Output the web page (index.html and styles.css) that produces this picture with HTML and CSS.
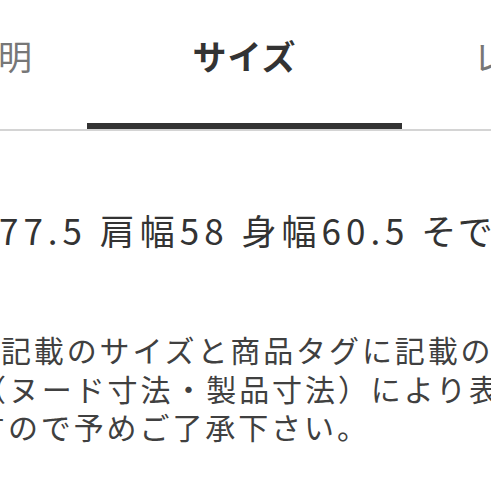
FILE: index.html
```html
<!DOCTYPE html>
<html lang="ja">
<head>
	<meta charset="utf-8">
	<title>サイズ</title>
	<link rel="stylesheet" href="styles.css">
</head>
<body>

<div class="itemTabs">
	<div class="itemTab itemTabPrev"><span>商品の説明</span></div>
	<div class="itemTab itemTabActive"><span>サイズ</span></div>
	<div class="itemTab itemTabNext"><span>レビュー</span></div>
</div>

<div class="itemSize">
	<p class="itemSizeSpec">77.5 肩幅58 身幅60.5 そで丈</p>
	<div class="itemSizeNote">
		<p class="noteLine1">店記載のサイズと商品タグに記載のサイズ</p>
		<p class="noteLine2">（ヌード寸法・製品寸法）により表記</p>
		<p class="noteLine3">すので予めご了承下さい。</p>
	</div>
</div>

</body>
</html>
```

FILE: styles.css
```css
html, body {margin: 0; padding: 0; background: #fff;}
body {
	width: 491px;
	height: 491px;
	overflow: hidden;
	font-family: "Noto Sans CJK JP", "Noto Sans", sans-serif;
	color: #333;
}
p {margin: 0; white-space: nowrap;}

.itemTabs {
	display: flex;
	height: 129px;
	border-bottom: 2px solid #d4d4d4;
}
.itemTab {
	flex: none;
	display: flex;
	padding-top: 39px;
	box-sizing: border-box;
	font-size: 34px;
	line-height: 34px;
	color: #777;
	white-space: nowrap;
}
.itemTabPrev {width: 87px; justify-content: flex-end; padding-right: 55px;}
.itemTabPrev span {flex: none;}
.itemTabActive {
	width: 315px;
	justify-content: center;
	border-bottom: 6px solid #333;
	color: #333;
	font-weight: bold;
	letter-spacing: 1px;
}
.itemTabNext {width: 89px; padding-left: 71px;}

.itemSize {padding-top: 81px;}
.itemSizeSpec {
	margin-left: -1px;
	font-size: 35px;
	line-height: 35px;
	letter-spacing: 5px;
	font-feature-settings: "palt";
}
.itemSizeNote {
	margin-top: 83px;
	font-size: 30px;
	line-height: 38.5px;
	letter-spacing: 2.9px;
	color: #404040;
}
.noteLine1 {margin-left: -32px;}
.noteLine2 {margin-left: -24px;}
.noteLine3 {margin-left: -25px;}
```
